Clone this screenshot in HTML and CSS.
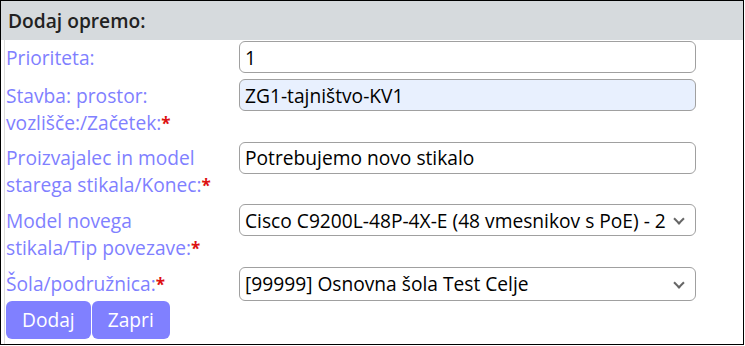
FILE: index.html
```html
<!DOCTYPE html>
<html>
	<head>
		<meta charset="utf-8" />
		<title>Dodaj opremo</title>
		<link rel="stylesheet" href="styles.css">
	</head>
	<body>
		<div class="panel">
			<div class="head">Dodaj opremo:</div>
			<div class="body">
				<div class="row">
					<label class="lbl">Prioriteta:</label>
					<input class="field" type="text" value="1">
				</div>
				<div class="row">
					<label class="lbl">Stavba: prostor: vozlišče:/Začetek:<span class="req">*</span></label>
					<input class="field auto" type="text" value="ZG1-tajništvo-KV1">
				</div>
				<div class="row">
					<label class="lbl">Proizvajalec in model starega stikala/Konec:<span class="req">*</span></label>
					<input class="field" type="text" value="Potrebujemo novo stikalo">
				</div>
				<div class="row">
					<label class="lbl">Model novega stikala/Tip povezave:<span class="req">*</span></label>
					<span class="sel-wrap">
						<select class="field sel">
							<option>Cisco C9200L-48P-4X-E (48 vmesnikov s PoE) - 2.450 €</option>
						</select>
					</span>
				</div>
				<div class="row last">
					<label class="lbl">Šola/podružnica:<span class="req">*</span></label>
					<span class="sel-wrap">
						<select class="field sel sel-tall">
							<option>[99999] Osnovna šola Test Celje</option>
						</select>
					</span>
				</div>
				<div class="buttons">
					<button class="btn">Dodaj</button><button class="btn">Zapri</button>
				</div>
			</div>
		</div>
	</body>
</html>
```

FILE: styles.css
```css
body{
	margin:0;
	font-family:"Open Sans", "Noto Sans", sans-serif;
	font-size:19.2px;
	background:#fff;
}
.panel{
	width:742px;
	height:343px;
	border:1px solid #000;
}
.head{
	height:39px;
	padding-left:7px;
	background-color:#d6dadd;
	color:#222;
	font-weight:600;
	display:flex;
	align-items:center;
}
.body{
	margin-left:3px;
	padding-left:1px;
	border-left:1px solid #dcdcdc;
	height:304px;
}
.row{
	display:flex;
	align-items:baseline;
	padding:1px 0 5px;
}
.row.last{
	padding-bottom:0;
}
.lbl{
	width:220px;
	margin-right:13px;
	color:#8080ff;
}
.req{
	color:#dd1111;
	font-weight:bold;
	font-size:17px;
}
.field{
	box-sizing:border-box;
	width:457px;
	height:32px;
	padding:0 5px;
	border:1px solid #a0a0a0;
	border-radius:6px;
	font-family:inherit;
	font-size:19.2px;
	color:#000;
	background:#fff;
}
.field.auto{
	background-color:#e8f0fe;
}
.sel-wrap{
	position:relative;
	display:inline-block;
}
.sel{
	appearance:none;
	-webkit-appearance:none;
	padding-right:29px;
}
.sel-tall{
	height:34px;
}
.sel-wrap::after{
	content:"";
	position:absolute;
	right:13px;
	top:50%;
	width:6px;
	height:6px;
	margin-top:-5px;
	border-right:2px solid #666;
	border-bottom:2px solid #666;
	transform:rotate(45deg);
	pointer-events:none;
}
.buttons{
	display:flex;
	gap:1px;
}
.btn{
	height:38px;
	padding:0 16px;
	border:none;
	border-radius:6px;
	background-color:#8080ff;
	color:#fff;
	font-family:inherit;
	font-size:19.2px;
}
```
